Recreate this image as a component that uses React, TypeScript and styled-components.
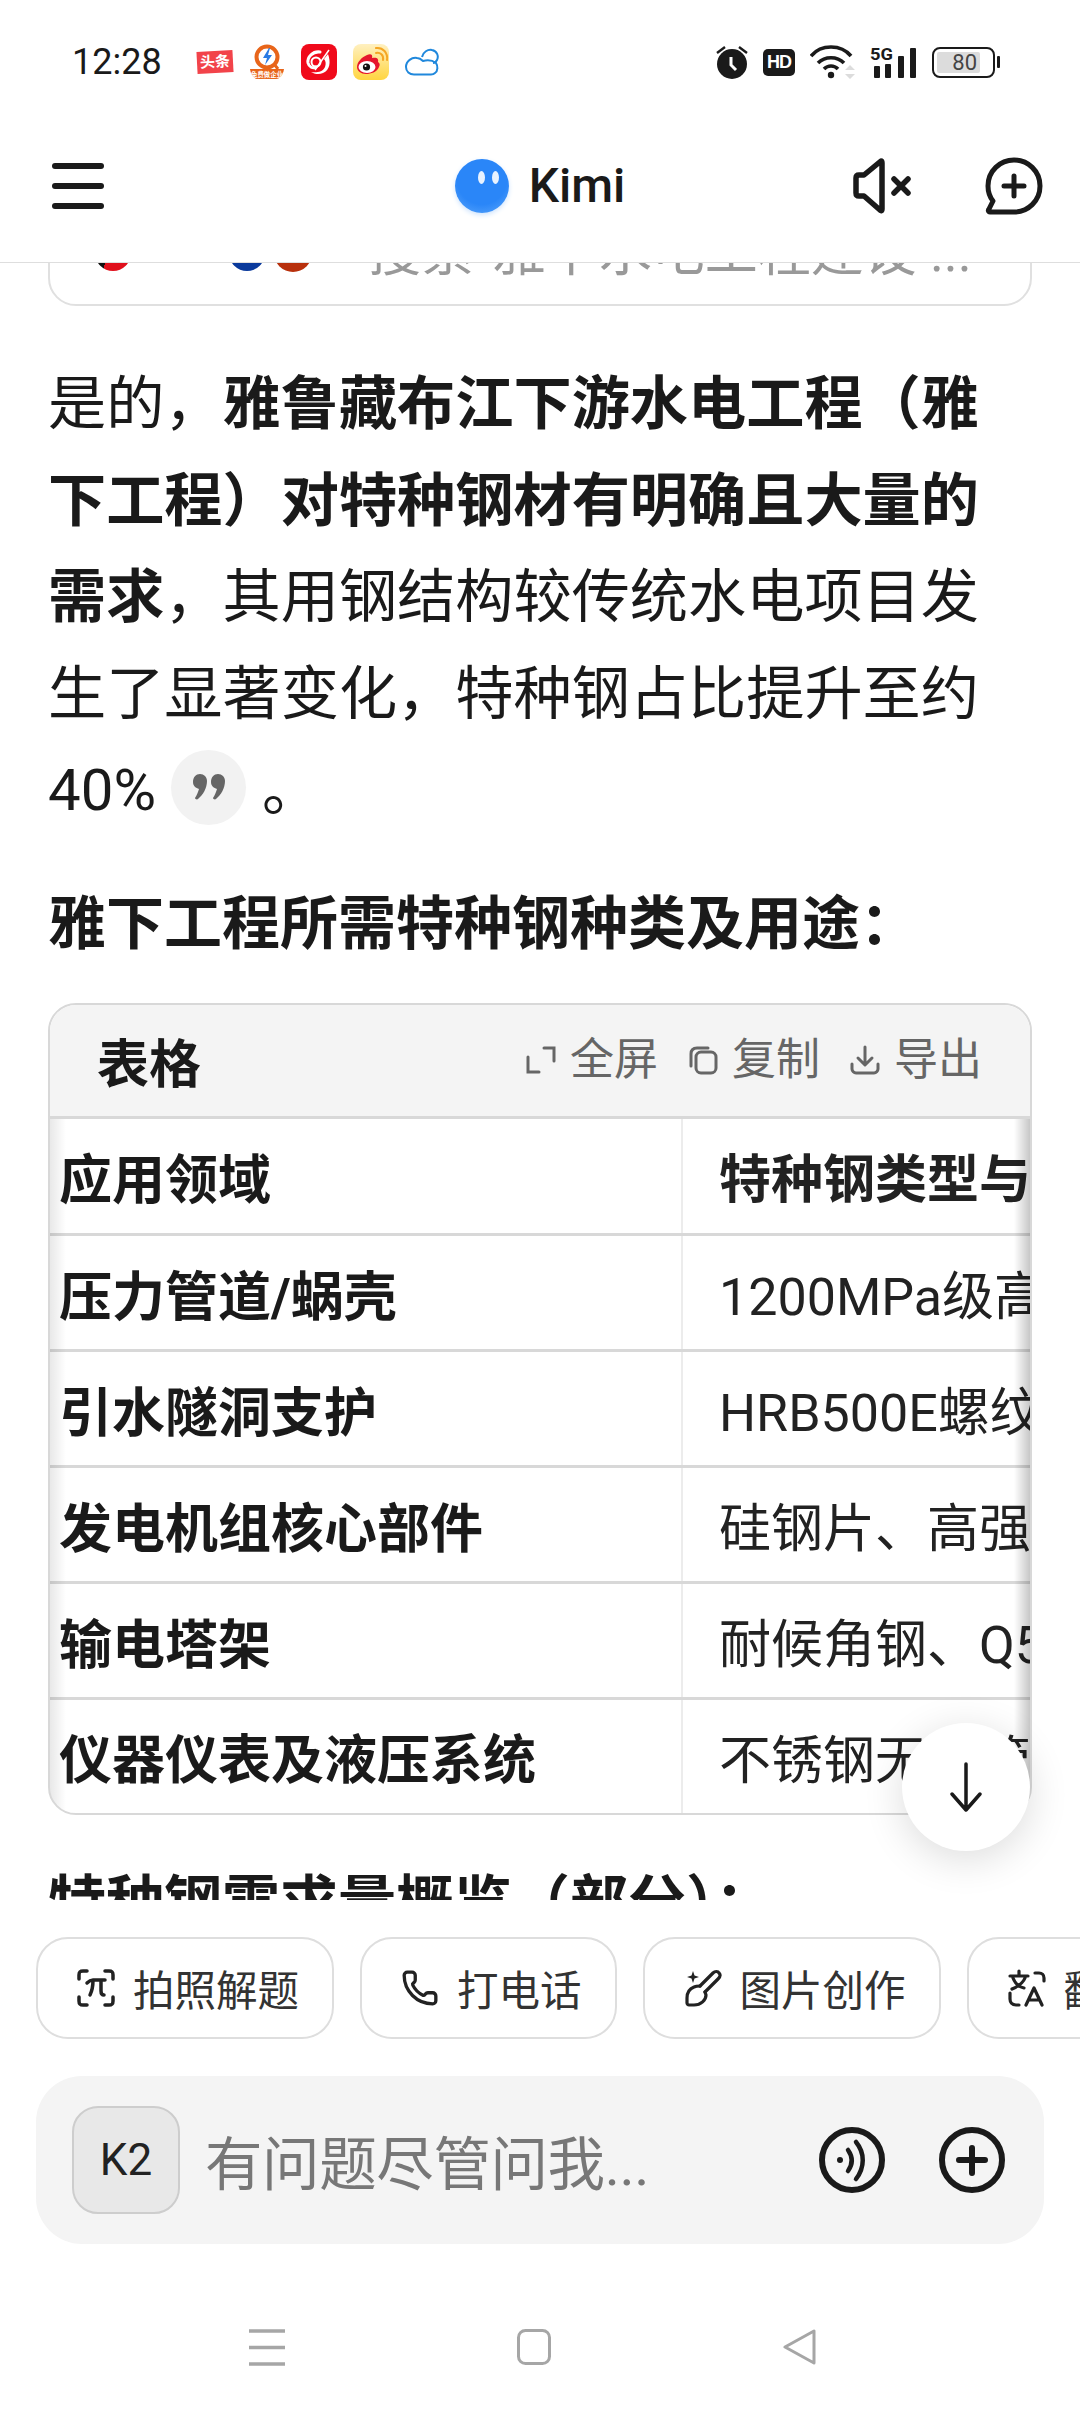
import React from 'react';
import styled, { createGlobalStyle } from 'styled-components';
import { Phone } from 'lucide-react';

const tableRows = [
  { area: '压力管道/蜗壳', steel: '1200MPa级高强钢板' },
  { area: '引水隧洞支护', steel: 'HRB500E螺纹钢筋' },
  { area: '发电机组核心部件', steel: '硅钢片、高强度钢' },
  { area: '输电塔架', steel: '耐候角钢、Q500' },
  { area: '仪器仪表及液压系统', steel: '不锈钢无缝管材' },
];

function HeadlineLogo() {
  return (
    <LogoBox>
      <HeadlineTag>头条</HeadlineTag>
    </LogoBox>
  );
}

function QuickLogo() {
  return (
    <svg width="36" height="36" viewBox="0 0 36 36">
      <circle cx="18" cy="13" r="10.5" fill="none" stroke="#e8651a" strokeWidth="4" />
      <path d="M25 20l4 5" stroke="#e8651a" strokeWidth="3" />
      <path d="M20 4l-6 10h4l-2 7 7-10h-4l2-7z" fill="#2a7be4" />
      <path d="M1 25h34c-1 6-4 10-8 10H9c-4 0-7-4-8-10z" fill="#e8651a" />
      <text x="18" y="33" fontSize="6.4" fontWeight="700" fill="#fff" textAnchor="middle" fontFamily="Noto Sans CJK SC">
        免费做企业
      </text>
    </svg>
  );
}

function RedAppLogo() {
  return (
    <svg width="36" height="36" viewBox="0 0 36 36">
      <rect width="36" height="36" rx="8" fill="#f00a1b" />
      <path d="M19 8c-7-1-13 5-12 11 1 4 5 6 8 4" fill="none" stroke="#fff" strokeWidth="3" strokeLinecap="round" />
      <path d="M27 10c3 8 2 16-5 19-4 2-9 1-12-1 5 1 12 0 14-5 1-3 1-6-1-8z" fill="#fff" />
      <circle cx="15" cy="18" r="4.5" fill="none" stroke="#fff" strokeWidth="2" />
      <path d="M28 6L14 26" stroke="#fff" strokeWidth="1.5" />
    </svg>
  );
}

function WeiboLogo() {
  return (
    <svg width="36" height="36" viewBox="0 0 36 36">
      <defs>
        <linearGradient id="wb" x1="0" y1="0" x2="0" y2="1">
          <stop offset="0" stopColor="#fff0c0" />
          <stop offset="1" stopColor="#ffd540" />
        </linearGradient>
      </defs>
      <rect width="36" height="36" rx="8" fill="url(#wb)" />
      <path d="M4 23c0-5 5-10 10-12 4-2 6 0 5 3 4-1 7 0 6 4 2 1 2 3 1 5-2 5-8 7-13 7-5 0-9-3-9-7z" fill="#e6162d" />
      <ellipse cx="14" cy="23" rx="8.5" ry="6" fill="#fff" />
      <circle cx="13.5" cy="23" r="3.6" fill="#111" />
      <circle cx="12.5" cy="22" r="1" fill="#fff" />
      <path d="M23 9c4-1 8 2 7 7M23 4c7-1 12 5 11 12" fill="none" stroke="#f5a623" strokeWidth="2" strokeLinecap="round" />
    </svg>
  );
}

function CloudLogo() {
  return (
    <svg width="34" height="28" viewBox="0 0 34 28" fill="none" stroke="#2088dc" strokeWidth="2">
      <path d="M9 26.5C4.500 26.500 1 23.500 1 19c0-6 6-10 11-9 2 0 4 1 6 3 4-1 9-1 13 2 2 3 2 8-1 10-1 1-2 1.500-4 1.500z" />
      <path d="M17 9c1-5 6-8 10-7 5 1 7 6 5 10-1 2-3 3-4 3" />
    </svg>
  );
}

function AlarmIcon() {
  return (
    <svg width="32" height="34" viewBox="0 0 32 34">
      <circle cx="16" cy="19" r="15" fill="#1a1a1a" />
      <path d="M1 8l8-6M31 8l-8-6" stroke="#1a1a1a" strokeWidth="2.4" />
      <path d="M15 12v8l5 5" fill="none" stroke="#fff" strokeWidth="3" />
    </svg>
  );
}

function WifiIcon() {
  return (
    <svg width="45" height="34" viewBox="0 0 45 34" fill="none">
      <path d="M1 11c10-12 30-12 40 0" stroke="#1a1a1a" strokeWidth="3.6" />
      <path d="M8 18c7-7 19-7 26 0" stroke="#1a1a1a" strokeWidth="3.6" />
      <path d="M14 24c4-4 10-4 14 0" stroke="#1a1a1a" strokeWidth="3.600" />
      <circle cx="21" cy="30" r="3.200" fill="#1a1a1a" />
      <path d="M40 20l5 5H35zM40 34l5-5H35z" fill="#dcdcdc" />
    </svg>
  );
}

function SignalBars() {
  return (
    <svg width="47" height="32" viewBox="0 0 47 32">
      <text x="0" y="14" fontSize="17" fontWeight="700" fill="#1a1a1a" fontFamily="Roboto" textLength="23" lengthAdjust="spacingAndGlyphs">
        5G
      </text>
      <rect x="4" y="20" width="6" height="12" rx="1" fill="#1a1a1a" />
      <rect x="15" y="18" width="6" height="14" rx="1" fill="#1a1a1a" />
      <rect x="28" y="10" width="6" height="22" rx="1" fill="#1a1a1a" />
      <rect x="40" y="2" width="6" height="30" rx="1" fill="#1a1a1a" />
    </svg>
  );
}

function SpeakerMuteIcon() {
  return (
    <svg width="58" height="56" viewBox="0 0 58 56" fill="none" stroke="#1a1a1a" strokeWidth="5.500" strokeLinecap="round" strokeLinejoin="round">
      <path d="M3 20c0-2 1-3 3-3h5L28 3c0 0 1 0 1 2v46c0 2-1 2-2 1L11 38H6c-2 0-3-1-3-3z" />
      <path d="M41 21l14 14M55 21L41 35" />
    </svg>
  );
}

function NewChatIcon() {
  return (
    <svg width="58" height="58" viewBox="0 0 58 58" fill="none" stroke="#1a1a1a" strokeWidth="5" strokeLinecap="round" strokeLinejoin="round">
      <path d="M29 3c14 0 26 11 26 26S43 55 29 55H5c-2 0-2-2-1-3l4-8C4 39 3 34 3 29 3 14 15 3 29 3z" />
      <path d="M29 19v20M19 29h20" />
    </svg>
  );
}

function QuoteMark() {
  return (
    <svg width="32" height="26" viewBox="0 0 32 26" fill="#666">
      <path d="M7 0c4 0 7 3 7 7 0 7-4 14-9 18-1 1-3 0-3-1 2-3 3-6 4-9-3-1-6-3-6-7C0 3 3 0 7 0z" />
      <path d="M25 0c4 0 7 3 7 7 0 7-4 14-9 18-1 1-3 0-3-1 2-3 3-6 4-9-3-1-6-3-6-7 0-5 3-8 7-8z" />
    </svg>
  );
}

function FullscreenIcon() {
  return (
    <svg width="30" height="30" viewBox="0 0 30 30" fill="none" stroke="#666" strokeWidth="3" strokeLinecap="round">
      <path d="M2 12v15h11M18 3h10v13" />
    </svg>
  );
}

function CopyIcon() {
  return (
    <svg width="30" height="30" viewBox="0 0 30 30" fill="none" stroke="#666" strokeWidth="3" strokeLinecap="round">
      <rect x="8" y="7" width="20" height="21" rx="5" />
      <path d="M3 21V9c0-4 2-6 6-6h11" />
    </svg>
  );
}

function ExportIcon() {
  return (
    <svg width="30" height="30" viewBox="0 0 30 30" fill="none" stroke="#666" strokeWidth="3" strokeLinecap="round" strokeLinejoin="round">
      <path d="M15 2v17M8 13l7 7 7-7M2 19v5c0 2 2 4 4 4h18c2 0 4-2 4-4v-5" />
    </svg>
  );
}

function PiScanIcon() {
  return (
    <svg width="38" height="38" viewBox="0 0 38 38" fill="none" stroke="#222" strokeWidth="3.500" strokeLinecap="round" strokeLinejoin="round">
      <path d="M10 2H6C3 2 2 3 2 6v4M28 2h4c3 0 4 1 4 4v4M10 36H6c-3 0-4-1-4-4v-4M28 36h4c3 0 4-1 4-4v-4" />
      <path d="M10 14c2-2 3-3 6-3h12M16 11c0 6-1 11-3 15M24 11v11c0 3 1 4 3 4" />
    </svg>
  );
}

function BrushIcon() {
  return (
    <svg width="38" height="38" viewBox="0 0 38 38" fill="none" stroke="#222" strokeWidth="3.200" strokeLinecap="round" strokeLinejoin="round">
      <path d="M16 17L29 4c2-2 5-2 6 0 2 2 1 4-1 6L21 23" />
      <path d="M16 17c-2 0-4 0-6 1-5 2-7 6-7 11v5c0 1 1 2 2 2h5c7 0 12-5 12-10l-1-3" />
      <path d="M9 2l1.500 4.500L15 8l-4.500 1.500L9 14l-1.500-4.500L3 8l4.500-1.500z" fill="#222" stroke="none" />
    </svg>
  );
}

function TranslateIcon() {
  return (
    <svg width="38" height="38" viewBox="0 0 38 38" fill="none" stroke="#222" strokeWidth="3.200" strokeLinecap="round" strokeLinejoin="round">
      <path d="M2 7h18M11 2v5M5 9c2 5 6 9 11 10M17 9c-2 5-6 8-13 11" />
      <path d="M18 36l8-17 8 17M21 31h10" />
      <path d="M27 4h4c3 0 5 2 5 5v3M2 24v6c0 3 2 6 6 6h3" />
    </svg>
  );
}

function VoiceIcon() {
  return (
    <svg width="66" height="66" viewBox="0 0 66 66" fill="none" stroke="#1a1a1a" strokeLinecap="round">
      <circle cx="33" cy="33" r="30" strokeWidth="6" />
      <circle cx="21" cy="33" r="3" fill="#1a1a1a" stroke="none" />
      <path d="M29 23c5 7 5 14 0 21" strokeWidth="4.500" />
      <path d="M37 15c9 11 9 25 0 37" strokeWidth="4.500" />
    </svg>
  );
}

function PlusCircleIcon() {
  return (
    <svg width="66" height="66" viewBox="0 0 66 66" fill="none" stroke="#1a1a1a" strokeLinecap="round">
      <circle cx="33" cy="33" r="30" strokeWidth="6" />
      <path d="M33 21v25M20 33h26" strokeWidth="6" />
    </svg>
  );
}

function DownArrowIcon() {
  return (
    <svg width="36" height="50" viewBox="0 0 36 50" fill="none" stroke="#1a1a1a" strokeWidth="3.500" strokeLinecap="round" strokeLinejoin="round">
      <path d="M18 2v46M4 32l14 16 14-16" />
    </svg>
  );
}

function NavMenuIcon() {
  return (
    <svg width="36" height="37" viewBox="0 0 36 37" stroke="#a6a6a6" strokeWidth="3.500">
      <path d="M0 2h36M0 18.500h36M0 35h36" />
    </svg>
  );
}

function NavHomeIcon() {
  return (
    <svg width="34" height="36" viewBox="0 0 34 36" fill="none" stroke="#a6a6a6" strokeWidth="3">
      <rect x="1.500" y="1.500" width="31" height="33" rx="7" />
    </svg>
  );
}

function NavBackIcon() {
  return (
    <svg width="33" height="36" viewBox="0 0 33 36" fill="none" stroke="#a6a6a6" strokeWidth="3" strokeLinejoin="round">
      <path d="M31 2v32L2 18z" />
    </svg>
  );
}

export default function App() {
  return (
    <Screen>
      <GlobalStyle />
      <StatusBar>
        <StatusLeft>
          <Clock>12:28</Clock>
          <NoticeIcons>
            <HeadlineLogo />
            <QuickLogo />
            <RedAppLogo />
            <WeiboLogo />
            <CloudLogo />
          </NoticeIcons>
        </StatusLeft>
        <StatusRight>
          <AlarmIcon />
          <HdBadge>HD</HdBadge>
          <WifiIcon />
          <SignalBars />
          <Battery>
            <BatteryBody>
              <BatteryLevel>80</BatteryLevel>
            </BatteryBody>
            <BatteryCap />
          </Battery>
        </StatusRight>
      </StatusBar>

      <TopNav>
        <Hamburger>
          <span />
          <span />
          <span />
        </Hamburger>
        <Brand>
          <BrandFace>
            <BrandEye />
            <BrandEye />
          </BrandFace>
          <BrandName>Kimi</BrandName>
        </Brand>
        <NavActions>
          <SpeakerMuteIcon />
          <NewChatIcon />
        </NavActions>
      </TopNav>

      <Content>
        <SourceCard>
          <SourceDot $size={36} $color="linear-gradient(100deg, #111 35%, #e0101c 35%)" $left={0} />
          <SourceDot $size={12} $color="#f0641e" $left={31} />
          <SourceDot $size={36} $color="#0a3a9c" $left={55} />
          <SourceDot $size={38} $color="#b8300c" $left={9} />
          <SourceText>搜索“雅下水电工程建设 ...</SourceText>
        </SourceCard>

        <Paragraph>
          是的，<strong>雅鲁藏布江下游水电工程（雅下工程）对特种钢材有明确且大量的需求</strong>
          ，其用钢结构较传统水电项目发生了显著变化，特种钢占比提升至约40%
          <Citation>
            <QuoteMark />
          </Citation>
          。
        </Paragraph>

        <Heading>雅下工程所需特种钢种类及用途：</Heading>

        <TableCard>
          <TableBar>
            <TableTitle>表格</TableTitle>
            <TableTools>
              <ToolButton>
                <FullscreenIcon />
                全屏
              </ToolButton>
              <ToolButton>
                <CopyIcon />
                复制
              </ToolButton>
              <ToolButton>
                <ExportIcon />
                导出
              </ToolButton>
            </TableTools>
          </TableBar>
          <TableScroll>
            <DataTable>
              <thead>
                <tr>
                  <AreaCell as="th">应用领域</AreaCell>
                  <SteelCell as="th" $head>
                    特种钢类型与要求说明
                  </SteelCell>
                </tr>
              </thead>
              <tbody>
                {tableRows.map((row) => (
                  <tr key={row.area}>
                    <AreaCell>{row.area}</AreaCell>
                    <SteelCell>{row.steel}</SteelCell>
                  </tr>
                ))}
              </tbody>
            </DataTable>
          </TableScroll>
        </TableCard>

        <NextHeading>特种钢需求量概览（部分）：</NextHeading>

        <ScrollDown>
          <DownArrowIcon />
        </ScrollDown>
      </Content>

      <ChipRow>
        <Chip>
          <PiScanIcon />
          拍照解题
        </Chip>
        <Chip>
          <Phone size={38} strokeWidth={2.1} color="#222" />
          打电话
        </Chip>
        <Chip>
          <BrushIcon />
          图片创作
        </Chip>
        <Chip>
          <TranslateIcon />
          翻译
        </Chip>
      </ChipRow>

      <InputBox>
        <ModelBadge>K2</ModelBadge>
        <Placeholder>有问题尽管问我...</Placeholder>
        <InputActions>
          <VoiceIcon />
          <PlusCircleIcon />
        </InputActions>
      </InputBox>

      <SystemNav>
        <NavMenuIcon />
        <NavHomeIcon />
        <NavBackIcon />
      </SystemNav>
    </Screen>
  );
}

const GlobalStyle = createGlobalStyle`
  html, body {
    margin: 0;
    padding: 0;
    background: #fff;
  }
  * {
    box-sizing: border-box;
  }
`;

const Screen = styled.div`
  width: 1080px;
  height: 2412px;
  display: flex;
  flex-direction: column;
  overflow: hidden;
  background: #fff;
  color: #1a1a1a;
  font-family: Roboto, 'Noto Sans CJK SC', sans-serif;
`;

const StatusBar = styled.div`
  height: 125px;
  flex: none;
  display: flex;
  align-items: flex-start;
  justify-content: space-between;
  padding: 44px 80px 0 72px;
`;

const StatusLeft = styled.div`
  display: flex;
  align-items: center;
  height: 36px;
  gap: 45px;
`;

const Clock = styled.div`
  font-size: 36px;
  line-height: 36px;
  width: 80px;
  color: #1a1a1a;
  white-space: nowrap;
`;

const NoticeIcons = styled.div`
  display: flex;
  align-items: center;
  gap: 16px;
`;

const LogoBox = styled.div`
  width: 36px;
  height: 36px;
  display: flex;
  align-items: center;
  justify-content: center;
`;

const HeadlineTag = styled.div`
  width: 36px;
  height: 22px;
  background: #f2434a;
  color: #fff;
  font-size: 15px;
  line-height: 22px;
  font-weight: 700;
  text-align: center;
  transform: rotate(-3deg);
  white-space: nowrap;
`;

const StatusRight = styled.div`
  display: flex;
  align-items: center;
  height: 36px;
  gap: 15px;
`;

const HdBadge = styled.div`
  width: 32px;
  height: 27px;
  border-radius: 5px;
  background: #1a1a1a;
  color: #fff;
  font-family: 'Liberation Sans', sans-serif;
  font-size: 18px;
  font-weight: 700;
  line-height: 27px;
  text-align: center;
  letter-spacing: -1px;
`;

const Battery = styled.div`
  display: flex;
  align-items: center;
  gap: 2px;
`;

const BatteryBody = styled.div`
  width: 63px;
  height: 31px;
  border: 2px solid #1a1a1a;
  border-radius: 8px;
  padding: 3px;
  display: flex;
`;

const BatteryLevel = styled.div`
  width: 43px;
  background: #dcdcdc;
  border-radius: 2px;
  color: #444;
  font-size: 22px;
  line-height: 21px;
  text-align: right;
  padding-right: 3px;
`;

const BatteryCap = styled.div`
  width: 3px;
  height: 12px;
  background: #1a1a1a;
  border-radius: 1px;
`;

const TopNav = styled.div`
  height: 138px;
  flex: none;
  display: grid;
  grid-template-columns: 1fr auto 1fr;
  align-items: center;
  padding: 0 37px 16px 37px;
  background: #fff;
  border-bottom: 1px solid #dedede;
  position: relative;
  z-index: 2;
`;

const Hamburger = styled.div`
  display: flex;
  flex-direction: column;
  gap: 14px;
  padding-left: 15px;

  span {
    display: block;
    width: 52px;
    height: 6px;
    border-radius: 3px;
    background: #1a1a1a;
  }
`;

const Brand = styled.div`
  display: flex;
  align-items: center;
  gap: 20px;
`;

const BrandFace = styled.div`
  width: 54px;
  height: 54px;
  border-radius: 50%;
  background: radial-gradient(circle at 50% 38%, #2a86f8 58%, #5fa9fb 100%);
  box-shadow: 0 2px 5px #cfe4fd;
  display: flex;
  justify-content: center;
  gap: 7px;
  padding: 12px 0 0 14px;
`;

const BrandEye = styled.div`
  width: 7px;
  height: 13px;
  border-radius: 50%;
  background: #e8f2ff;
`;

const BrandName = styled.div`
  font-family: Roboto, sans-serif;
  font-size: 48px;
  font-weight: 500;
  line-height: 54px;
  color: #1a1a1a;
`;

const NavActions = styled.div`
  display: flex;
  justify-content: flex-end;
  align-items: center;
  gap: 74px;
`;

const Content = styled.div`
  height: 1637px;
  flex: none;
  overflow: hidden;
  position: relative;
  padding: 0 48px 0 48px;
`;

const SourceCard = styled.div`
  margin-top: -77px;
  height: 120px;
  border: 2px solid #e0e0e0;
  border-radius: 28px;
  padding: 45px 0 0 45px;
  display: flex;
  align-items: flex-start;
`;

const SourceDot = styled.div<{ $size: number; $color: string; $left: number }>`
  width: ${(p) => p.$size}px;
  height: ${(p) => p.$size}px;
  margin-left: ${(p) => p.$left}px;
  margin-top: ${(p) => 20 - p.$size / 2}px;
  flex: none;
  border-radius: 50%;
  background: ${(p) => p.$color};
`;

const SourceText = styled.div`
  margin-left: 56px;
  font-size: 53px;
  line-height: 40px;
  color: #999;
  white-space: nowrap;
`;

const Paragraph = styled.p`
  margin: 50px 0 0;
  font-size: 58.2px;
  line-height: 96.5px;
  color: #1a1a1a;

  strong {
    font-weight: 700;
  }
`;

const Citation = styled.span`
  display: inline-flex;
  align-items: center;
  justify-content: center;
  width: 75px;
  height: 75px;
  margin: 0 16px 15px 15px;
  vertical-align: middle;
  border-radius: 50%;
  background: #f2f2f2;
`;

const Heading = styled.h2`
  margin: 42px 0 0;
  font-size: 58px;
  line-height: 84px;
  font-weight: 700;
`;

const NextHeading = styled(Heading)`
  margin-top: 46px;
  white-space: nowrap;
`;

const TableCard = styled.div`
  margin-top: 37px;
  border: 2px solid #d8d8d8;
  border-radius: 28px;
  overflow: hidden;
`;

const TableBar = styled.div`
  height: 114px;
  display: flex;
  align-items: center;
  justify-content: space-between;
  padding: 0 48px 0 47px;
  background: #f4f4f4;
  border-bottom: 3px solid #d8d8d8;
`;

const TableTitle = styled.div`
  font-size: 52px;
  font-weight: 700;
`;

const TableTools = styled.div`
  display: flex;
  gap: 30px;
`;

const ToolButton = styled.div`
  display: flex;
  align-items: center;
  gap: 14px;
  font-size: 44px;
  line-height: 52px;
  color: #666;
`;

const TableScroll = styled.div`
  position: relative;
  overflow: hidden;

  &::before,
  &::after {
    content: '';
    position: absolute;
    top: 0;
    bottom: 0;
    width: 16px;
    pointer-events: none;
  }

  &::before {
    left: 0;
    background: linear-gradient(to right, rgba(0, 0, 0, 0.09), rgba(0, 0, 0, 0));
  }

  &::after {
    right: 0;
    background: linear-gradient(to left, rgba(0, 0, 0, 0.22), rgba(0, 0, 0, 0));
  }
`;

const DataTable = styled.table`
  width: 1400px;
  table-layout: fixed;
  border-collapse: collapse;
`;

const AreaCell = styled.td`
  width: 632px;
  height: 116px;
  padding: 0 0 0 9px;
  font-size: 53px;
  font-weight: 700;
  text-align: left;
  white-space: nowrap;
  border-bottom: 3px solid #d8d8d8;
  tbody tr:last-child & {
    height: 114px;
    border-bottom: none;
  }
`;

const SteelCell = styled.td<{ $head?: boolean }>`
  padding: 0 0 0 36px;
  font-size: 52px;
  font-weight: ${(p) => (p.$head ? 700 : 400)};
  text-align: left;
  white-space: nowrap;
  color: #222;
  border-left: 2px solid #ececec;
  border-bottom: 3px solid #d8d8d8;
  tbody tr:last-child & {
    border-bottom: none;
  }
`;

const ScrollDown = styled.div`
  position: absolute;
  right: 50px;
  bottom: 49px;
  width: 128px;
  height: 128px;
  border-radius: 50%;
  background: #fff;
  box-shadow: 0 8px 40px rgba(0, 0, 0, 0.14);
  display: flex;
  align-items: center;
  justify-content: center;
`;

const ChipRow = styled.div`
  flex: none;
  display: flex;
  gap: 26px;
  margin-top: 37px;
  padding-left: 36px;
  overflow: hidden;
`;

const Chip = styled.div`
  flex: none;
  height: 102px;
  display: flex;
  align-items: center;
  gap: 18px;
  padding: 0 33px 0 39px;
  border: 2px solid #dedede;
  border-radius: 32px;
  font-size: 41.5px;
  color: #333;
  white-space: nowrap;
`;

const InputBox = styled.div`
  flex: none;
  height: 168px;
  margin: 37px 36px 0;
  border-radius: 46px;
  background: #f4f4f4;
  display: flex;
  align-items: center;
  padding: 0 39px 0 36px;
`;

const ModelBadge = styled.div`
  width: 108px;
  height: 108px;
  flex: none;
  border-radius: 26px;
  border: 2px solid #cdcdcd;
  background: #e8e8e8;
  display: flex;
  align-items: center;
  justify-content: center;
  font-size: 44px;
  color: #222;
`;

const Placeholder = styled.div`
  flex: 1;
  margin-left: 25px;
  font-size: 57.5px;
  letter-spacing: -0.4px;
  color: #777;
  white-space: nowrap;
`;

const InputActions = styled.div`
  display: flex;
  align-items: center;
  gap: 54px;
`;

const SystemNav = styled.div`
  flex: 1;
  display: flex;
  align-items: center;
  justify-content: center;
  gap: 232px;
  padding: 38px 16px 0 0;
`;
